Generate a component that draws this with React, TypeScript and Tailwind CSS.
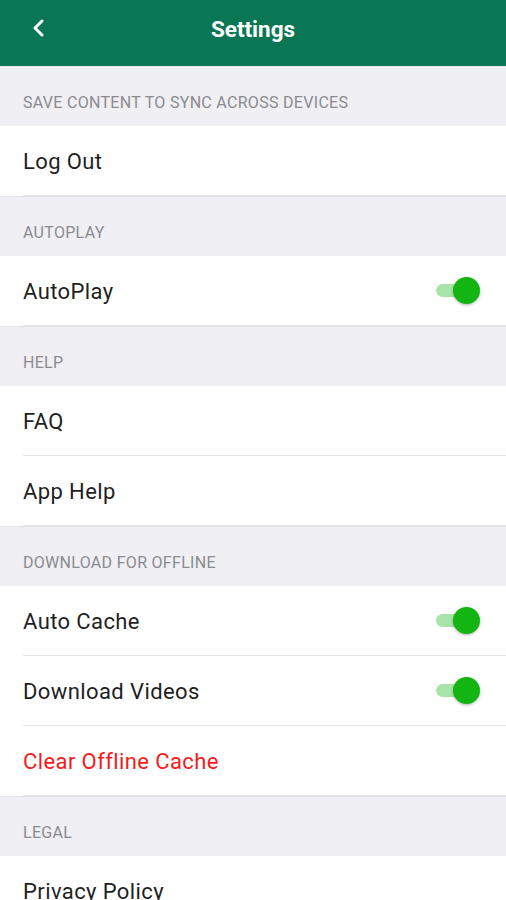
import React from 'react';

type Row = {
    label: string;
    toggle?: boolean;
    danger?: boolean;
};

type Section = {
    title: string;
    rows: Row[];
};

const sections: Section[] = [
    { title: 'Save content to sync across devices', rows: [{ label: 'Log Out' }] },
    { title: 'AutoPlay', rows: [{ label: 'AutoPlay', toggle: true }] },
    { title: 'Help', rows: [{ label: 'FAQ' }, { label: 'App Help' }] },
    {
        title: 'Download for offline',
        rows: [
            { label: 'Auto Cache', toggle: true },
            { label: 'Download Videos', toggle: true },
            { label: 'Clear Offline Cache', danger: true },
        ],
    },
    { title: 'Legal', rows: [{ label: 'Privacy Policy' }] },
];

const Toggle = () => (
    <div className="relative w-[46px] h-[28px] flex items-center">
        <div className="absolute left-[2px] right-[4px] h-[13px] rounded-full bg-[#a8e4a8]" />
        <div className="absolute right-0 w-[27px] h-[27px] rounded-full bg-[#12b512] shadow-[0_1px_3px_rgba(0,0,0,0.3)]" />
    </div>
);

export default function App() {
    return (
        <div className="w-[506px] h-[900px] overflow-hidden bg-white font-['Roboto',sans-serif]">
            {/* Top bar */}
            <div className="h-[66px] bg-[#0a7754] flex items-center relative">
                <div className="absolute left-[30px] top-[17px]">
                    <svg width="18" height="22" viewBox="0 0 18 22" fill="none">
                        <path d="M12 4 L5 11 L12 18" stroke="white" strokeWidth="3" strokeLinecap="round" strokeLinejoin="round" />
                    </svg>
                </div>
                <h1 className="w-full text-center text-white font-bold text-[22.5px] -mt-[6px]">Settings</h1>
            </div>

            {sections.map((section) => (
                <div key={section.title}>
                    <div className="h-[60px] bg-[#efeff4] border-t border-[#e4e4e8] px-[23px] flex items-end pb-[11px]">
                        <span className="uppercase text-[16px] text-[#8b8b8f] tracking-[0.3px]">{section.title}</span>
                    </div>
                    {section.rows.map((row) => (
                        <div key={row.label} className="h-[70px] pl-[23px]">
                            <div className="h-full border-b border-[#e6e6e6] flex items-center justify-between pr-[26px]">
                                <span className={`text-[22px] tracking-[0.4px] pt-[1px] ${row.danger ? 'text-[#f51b1b]' : 'text-[#1f1f1f]'}`}>{row.label}</span>
                                {row.toggle && <Toggle />}
                            </div>
                        </div>
                    ))}
                </div>
            ))}
        </div>
    );
}
